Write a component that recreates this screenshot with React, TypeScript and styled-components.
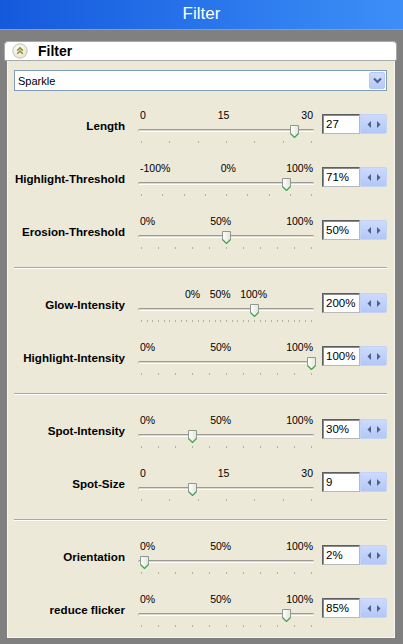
import React from 'react';
import styled, { createGlobalStyle } from 'styled-components';

const GlobalStyle = createGlobalStyle`
  html, body {
    margin: 0;
    padding: 0;
    background: #808080;
    font-family: "Liberation Sans", Arial, sans-serif;
  }
`;

interface SliderRow {
  label: string;
  scale: string[];
  min: number;
  max: number;
  value: number;
  ticks: number;
  display: string;
  narrowScale?: boolean;
}

const groups: SliderRow[][] = [
  [
    { label: 'Length', scale: ['0', '15', '30'], min: 0, max: 30, value: 27, ticks: 7, display: '27' },
    { label: 'Highlight-Threshold', scale: ['-100%', '0%', '100%'], min: -100, max: 100, value: 71, ticks: 9, display: '71%' },
    { label: 'Erosion-Threshold', scale: ['0%', '50%', '100%'], min: 0, max: 100, value: 50, ticks: 11, display: '50%' },
  ],
  [
    { label: 'Glow-Intensity', scale: ['0%', '50%', '100%'], min: 0, max: 300, value: 200, ticks: 31, display: '200%', narrowScale: true },
    { label: 'Highlight-Intensity', scale: ['0%', '50%', '100%'], min: 0, max: 100, value: 100, ticks: 11, display: '100%' },
  ],
  [
    { label: 'Spot-Intensity', scale: ['0%', '50%', '100%'], min: 0, max: 100, value: 30, ticks: 11, display: '30%' },
    { label: 'Spot-Size', scale: ['0', '15', '30'], min: 0, max: 30, value: 9, ticks: 7, display: '9' },
  ],
  [
    { label: 'Orientation', scale: ['0%', '50%', '100%'], min: 0, max: 100, value: 2, ticks: 11, display: '2%' },
    { label: 'reduce flicker', scale: ['0%', '50%', '100%'], min: 0, max: 100, value: 85, ticks: 11, display: '85%' },
  ],
];

const Window = styled.div`
  width: 403px;
  height: 644px;
  overflow: hidden;
  background: #808080;
`;

const TitleBar = styled.div`
  height: 30px;
  box-sizing: border-box;
  display: flex;
  align-items: center;
  justify-content: center;
  padding-bottom: 1px;
  background: linear-gradient(to right, #1459dc 0%, #2a77ec 55%, #3d8ff7 100%);
  border-bottom: 1px solid #9a9a9a;
  color: #fff;
  font-size: 17px;
`;

const Body = styled.div`
  padding: 11px 6px 0 4px;
`;

const SectionHeader = styled.div`
  height: 20px;
  box-sizing: border-box;
  display: flex;
  align-items: center;
  gap: 10px;
  padding-left: 7px;
  background: #fff;
  border: 1px solid #a9a9a9;
  border-radius: 4px 4px 2px 2px;
  font-size: 14px;
  font-weight: bold;
  color: #000;
  position: relative;
  z-index: 1;
`;

const Panel = styled.div`
  margin: 0 2px 0 3px;
  height: 577px;
  box-sizing: border-box;
  overflow: hidden;
  background: #ece9d8;
  border: 1px solid #f7f6f0;
  border-top: none;
  padding: 0 7px 0 6px;
`;

const Select = styled.div`
  margin-top: 9px;
  height: 21px;
  box-sizing: border-box;
  display: flex;
  align-items: center;
  justify-content: space-between;
  background: #fff;
  border: 1px solid #7f9db9;
  padding: 0 1px 0 3px;
  font-size: 11px;
  color: #000;
`;

const SelectButton = styled.div`
  width: 16px;
  height: 17px;
  box-sizing: border-box;
  display: flex;
  align-items: center;
  justify-content: center;
  background: linear-gradient(to bottom, #d0dcfd, #b5c9f7);
  border: 1px solid #b7c8f0;
  border-radius: 2px;
`;

const Group = styled.div<{ $first?: boolean }>`
  padding-top: ${p => (p.$first ? '15px' : '16px')};
`;

const Divider = styled.div`
  margin-top: 2px;
  height: 1px;
  background: #aca899;
  border-bottom: 1px solid #fff;
`;

const Row = styled.div`
  height: 53px;
  display: flex;
  align-items: flex-start;
`;

const Label = styled.div`
  width: 111px;
  margin-right: 13px;
  padding-top: 13px;
  text-align: right;
  font-size: 11.6px;
  line-height: 14px;
  font-weight: bold;
  color: #000;
  white-space: nowrap;
`;

const Slider = styled.div`
  width: 176px;
  padding-top: 3px;
`;

const Scale = styled.div<{ $narrow?: boolean }>`
  height: 13px;
  display: flex;
  justify-content: space-between;
  padding: ${p => (p.$narrow ? '0 47px' : '0 1px 0 2px')};
  font-size: 10.5px;
  line-height: 13px;
  color: #000;
`;

const TrackArea = styled.div`
  position: relative;
  height: 16px;
`;

const Track = styled.div`
  position: relative;
  top: 7px;
  height: 3px;
  box-sizing: border-box;
  border-radius: 2px;
  background: #dcdad0;
  border-top: 1px solid #9d9a8c;
  border-bottom: 1px solid #fff;
  border-left: 1px solid #b8b5a8;
`;

const ThumbWrap = styled.div`
  position: absolute;
  top: 2px;
  width: 9px;
  height: 13px;
`;

const Ticks = styled.div`
  margin-top: 3px;
  height: 2px;
  display: flex;
  justify-content: space-between;
  padding: 0 2px 0 3px;
`;

const Tick = styled.span`
  width: 1px;
  height: 2px;
  background: #b3b0a4;
`;

const SpinBox = styled.div`
  margin-left: 8px;
  margin-top: 8px;
  display: flex;
  height: 20px;
`;

const ValueField = styled.div`
  width: 38px;
  height: 20px;
  box-sizing: border-box;
  background: #fff;
  border: 1px solid;
  border-color: #5e5e5e #b8b8b8 #b8b8b8 #5e5e5e;
  box-shadow: inset 1px 1px 0 #8a8a8a;
  padding-left: 3px;
  font-size: 11.5px;
  line-height: 18px;
  color: #000;
`;

const SpinButton = styled.div`
  width: 27px;
  height: 20px;
  box-sizing: border-box;
  display: flex;
  align-items: center;
  justify-content: center;
  gap: 6px;
  background: linear-gradient(to bottom, #cddafd, #b3c7f6);
  border: 1px solid #c4d2f6;
  border-radius: 0 2px 2px 0;
`;

const CollapseIcon = () => (
  <svg width="16" height="16" viewBox="0 0 16 16">
    <defs>
      <radialGradient id="ci" cx="0.4" cy="0.35" r="0.7">
        <stop offset="0" stopColor="#ffffff" />
        <stop offset="1" stopColor="#e6e2cf" />
      </radialGradient>
    </defs>
    <circle cx="8" cy="8" r="7.2" fill="url(#ci)" stroke="#c9c5b2" strokeWidth="1" />
    <path d="M5.2 7.6 L8 4.9 L10.8 7.6 M5.2 10.8 L8 8.1 L10.8 10.8" fill="none" stroke="#8e8f2e" strokeWidth="1.5" />
  </svg>
);

const ChevronDown = () => (
  <svg width="9" height="7" viewBox="0 0 9 7">
    <path d="M1 1.5 L4.5 5 L8 1.5" fill="none" stroke="#4d6185" strokeWidth="2" />
  </svg>
);

const Arrow = ({ dir }: { dir: 'left' | 'right' }) => (
  <svg width="4" height="7" viewBox="0 0 4 7">
    <path d={dir === 'left' ? 'M4 0 L0.5 3.5 L4 7 Z' : 'M0 0 L3.5 3.5 L0 7 Z'} fill="#4d6185" />
  </svg>
);

const Thumb = () => (
  <svg width="9" height="13" viewBox="0 0 9 13">
    <defs>
      <linearGradient id="tg" x1="0" y1="0" x2="1" y2="0">
        <stop offset="0" stopColor="#ffffff" />
        <stop offset="1" stopColor="#e4e4dc" />
      </linearGradient>
    </defs>
    <path d="M0.5 0.5 H8.5 V8.5 L4.5 12.5 L0.5 8.5 Z" fill="url(#tg)" stroke="#8e9a90" />
    <path d="M0.5 8.5 L4.5 12.5 L8.5 8.5" fill="none" stroke="#3fa04a" strokeWidth="1.2" />
  </svg>
);

const SliderRowView: React.FunctionComponent<{ row: SliderRow }> = ({ row }) => {
  const frac = (row.value - row.min) / (row.max - row.min);
  const thumbLeft = 3.5 + frac * 170 - 4.5;
  return (
    <Row>
      <Label>{row.label}</Label>
      <Slider>
        <Scale $narrow={row.narrowScale}>
          {row.scale.map(s => (
            <span key={s}>{s}</span>
          ))}
        </Scale>
        <TrackArea>
          <Track />
          <ThumbWrap style={{ left: `${thumbLeft}px` }}>
            <Thumb />
          </ThumbWrap>
        </TrackArea>
        <Ticks>
          {Array.from({ length: row.ticks }).map((_, i) => (
            <Tick key={i} />
          ))}
        </Ticks>
      </Slider>
      <SpinBox>
        <ValueField>{row.display}</ValueField>
        <SpinButton>
          <Arrow dir="left" />
          <Arrow dir="right" />
        </SpinButton>
      </SpinBox>
    </Row>
  );
};

const App: React.FunctionComponent = () => {
  return (
    <Window>
      <GlobalStyle />
      <TitleBar>Filter</TitleBar>
      <Body>
        <SectionHeader>
          <CollapseIcon />
          <span>Filter</span>
        </SectionHeader>
        <Panel>
          <Select>
            <span>Sparkle</span>
            <SelectButton>
              <ChevronDown />
            </SelectButton>
          </Select>
          {groups.map((group, gi) => (
            <React.Fragment key={gi}>
              {gi > 0 && <Divider />}
              <Group $first={gi === 0}>
                {group.map(row => (
                  <SliderRowView key={row.label} row={row} />
                ))}
              </Group>
            </React.Fragment>
          ))}
        </Panel>
      </Body>
    </Window>
  );
};

export default App;
